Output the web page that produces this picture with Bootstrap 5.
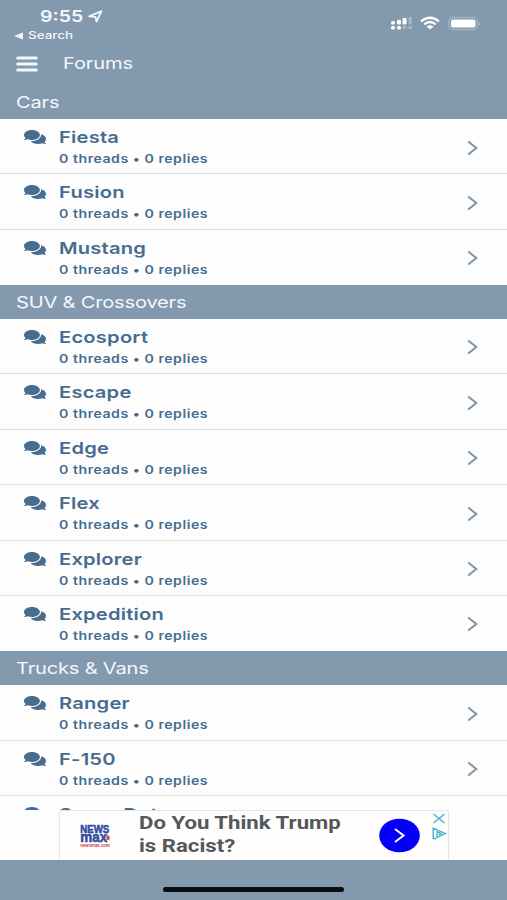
<!DOCTYPE html>
<html lang="en">
<head>
<meta charset="utf-8">
<meta name="viewport" content="width=device-width, initial-scale=1">
<title>Forums</title>
<link href="https://cdn.jsdelivr.net/npm/bootstrap@5.3.0/dist/css/bootstrap.min.css" rel="stylesheet">
<style>
:root { --slate: #8299ae; --ink: #466c8e; }
body { font-family: Inter, "Liberation Sans", sans-serif; background: #fdfdfe; }
.screen { height: 900px; }
.stretch { display: block; width: max-content; transform: scaleX(1.22); transform-origin: 0 50%; white-space: nowrap; }
.slate { background: var(--slate); color: #f4f8fc; }
.status { height: 44px; padding: 7px 26px 0 14px; }
.clock { font-size: 16px; line-height: 18px; font-weight: 600; margin-left: 26px; }
.clock svg { margin: 3px 0 0 13px; }
.back { font-size: 11px; line-height: 13px; font-weight: 500; margin-top: 4px; }
.back .stretch { margin-left: 5px; }
.status-icons { padding-top: 9px; }
.title-bar { height: 41px; padding: 0 16px 2px; }
.title-bar .stretch { font-size: 16.5px; margin-left: 25px; letter-spacing: -.12px; }
.section-head { height: 34px; padding: 0 16px; font-size: 16.5px; letter-spacing: -.18px; }
.forum { height: 55.4px; padding: 8px 29px 0 24px; border-bottom: 1px solid #dcdfe2; color: var(--ink); }
.forum:last-child { border-bottom: 0; height: 55.2px; }
.forum .bubbles { margin: 2px 13px 0 0; }
.forum .name { font-size: 16.5px; line-height: 21px; font-weight: 600; letter-spacing: .18px; }
.forum .count { font-size: 11.6px; line-height: 23px; font-weight: 600; letter-spacing: .42px; }
.forum .go { margin-top: 12.5px; }
.home { height: 40px; }
.home-pill { width: 181px; height: 5px; border-radius: 3px; background: #0b0d0f; margin: 27px 0 0 163px; }
.ad-strip { height: 50px; background: #fdfdfe; padding-left: 59px; }
.ad { width: 390px; height: 50px; background: #fefefe; border: 1px solid #e4e5e7; border-bottom: 0; }
.brand { width: 79px; padding: 11px 0 0 20px; }
.ad-copy { width: 240px; font: 700 18px/23px Roboto, sans-serif; color: #56575a; }
.ad-copy .stretch { transform: scaleX(1.232); }
.ad-go { margin-top: 7px; }
.ad-marks { margin: 2px 0 0 12px; }
</style>
</head>
<body>
<svg class="d-none" xmlns="http://www.w3.org/2000/svg">
  <symbol id="bubbles" viewBox="0 0 576 512" preserveAspectRatio="none"><path fill="currentColor" d="M416 192c0-88.400-93.100-160-208-160S0 103.600 0 192c0 34.300 14.100 65.900 38 92-13.400 30.200-35.500 54.200-35.800 54.500-2.200 2.300-2.800 5.700-1.500 8.700S4.800 352 8 352c36.600 0 66.900-12.300 88.700-25 32.200 15.700 70.300 25 111.300 25 114.900 0 208-71.600 208-160zm122 220c23.900-26 38-57.700 38-92 0-66.900-53.500-124.200-129.300-148.100.9 6.600 1.300 13.300 1.300 20.100 0 105.900-107.700 192-240 192-10.800 0-21.300-.8-31.700-1.900C207.800 439.600 281.800 480 368 480c41 0 79.100-9.200 111.300-25 21.800 12.700 52.100 25 88.700 25 3.200 0 6.100-1.900 7.300-4.800 1.300-2.900.7-6.300-1.500-8.700-.3-.3-22.400-24.200-35.800-54.500z"/></symbol>
  <symbol id="chevron" viewBox="0 0 11 16"><path d="M1.200 1.500 9.300 8l-8.100 6.500" fill="none" stroke="#7e95a8" stroke-width="2"/></symbol>
</svg>

<div class="screen d-flex flex-column overflow-hidden">
  <header class="slate flex-shrink-0">
    <div class="status d-flex justify-content-between">
      <div>
        <div class="clock d-flex"><span class="stretch">9:55</span>
          <svg width="15" height="13" viewBox="0 0 15 13"><path d="M1.200 6.400 13.500 1.200 8.500 11.600 7.500 6.800Z" fill="none" stroke="#f4f8fc" stroke-width="1.800" stroke-linejoin="round"/></svg>
        </div>
        <div class="back d-flex align-items-center"><svg width="9" height="8" viewBox="0 0 9 8"><path d="M0 4 9 .5v7Z" fill="#f4f8fc"/></svg><span class="stretch">Search</span></div>
      </div>
      <div class="status-icons d-flex">
        <svg width="91" height="16" viewBox="390 16 91 16">
          <g fill="#fff"><rect x="391" y="21" width="4" height="3.500" rx="1.500"/><rect x="397" y="20" width="4" height="4.500" rx="1"/><rect x="402.500" y="18" width="4" height="6.500" rx="1"/><rect x="391" y="26" width="4" height="3.500" rx="1.500"/><rect x="397" y="26" width="4" height="3.500" rx="1.500"/></g>
          <g fill="#fff" opacity=".28"><rect x="408.500" y="17" width="3.500" height="7.500" rx="1"/><rect x="402.500" y="26" width="4" height="3" rx="1"/><rect x="408.500" y="26" width="3.500" height="3" rx="1"/></g>
          <g fill="none" stroke="#fff" stroke-width="2.300"><path d="M421 21.300Q430 14.200 439 21.300"/><path d="M424.300 24.300Q430 19.800 435.700 24.300"/></g><path d="M426.500 26.600Q430 23.900 433.500 26.600L430 29.400Z" fill="#fff"/>
          <rect x="449" y="17.500" width="28.500" height="12" rx="4" fill="none" stroke="#a3b4c3" stroke-width="1.500"/><rect x="451" y="19.500" width="24.500" height="8" rx="2" fill="#fff"/><path d="M479 21.500q2 2 0 4Z" fill="#b6c4d0"/>
        </svg>
      </div>
    </div>
    <div class="title-bar d-flex align-items-center">
      <svg width="22" height="16" viewBox="0 0 22 16"><path d="M1.800 2h18.400M1.800 8h18.400M1.800 14h18.400" stroke="#f4f8fc" stroke-width="3.200" stroke-linecap="round"/></svg>
      <span class="stretch">Forums</span>
    </div>
  </header>

  <main class="flex-grow-1 overflow-hidden" id="forums" style="min-height:0"></main>

  <div class="ad-strip flex-shrink-0">
    <aside class="ad d-flex align-items-start">
      <div class="brand">
        <svg class="d-block" width="31" height="27" viewBox="0 0 31 27" font-family="Liberation Sans, Arial, sans-serif" font-weight="700">
          <g fill="#2f4da2" stroke="#2f4da2" stroke-width=".6">
            <text x=".3" y="10.500" font-size="11.500" textLength="29" lengthAdjust="spacingAndGlyphs">NEWS</text>
            <text x=".3" y="20" font-size="15.500" textLength="27" lengthAdjust="spacingAndGlyphs">max</text>
          </g>
          <path d="m28 12.500.8 2 1.500.2-1.200 1.600.6 2.200-1.700-1.100-1.700 1.100.5-2.200-1.200-1.600 1.600-.2Z" fill="#d8323e"/>
          <text x=".3" y="24.800" font-size="5.500" fill="#d8323e" textLength="29.500" lengthAdjust="spacingAndGlyphs">newsmax.com</text>
        </svg>
      </div>
      <div class="ad-copy"><span class="stretch">Do You Think Trump</span><span class="stretch">is Racist?</span></div>
      <svg class="ad-go" width="41" height="35" viewBox="0 0 41 35"><ellipse cx="20.500" cy="17.500" rx="20.300" ry="16.800" fill="#0500f5"/><path d="m16 11 8.500 6.500-8.500 6.500" fill="none" stroke="#fff" stroke-width="2"/></svg>
      <svg class="ad-marks" width="15" height="28" viewBox="0 0 15 28"><path d="m1.500 1 11 9m0-9-11 9" fill="none" stroke="#45aacb" stroke-width="1.300"/><path d="M4 25.500H1.200V15.200L13.500 20.500 5 24.500V18.800L9.300 20.600 6.800 22" fill="none" stroke="#45aacb" stroke-width="1.300"/></svg>
    </aside>
  </div>

  <footer class="home slate flex-shrink-0"><div class="home-pill"></div></footer>
</div>

<script src="https://cdn.jsdelivr.net/npm/bootstrap@5.3.0/dist/js/bootstrap.bundle.min.js"></script>
<script>
const sections = [
  ['Cars', ['Fiesta', 'Fusion', 'Mustang']],
  ['SUV & Crossovers', ['Ecosport', 'Escape', 'Edge', 'Flex', 'Explorer', 'Expedition']],
  ['Trucks & Vans', ['Ranger', 'F-150', 'Super Duty']]
];
const row = name => `<a class="forum d-flex text-decoration-none" href="#">
  <svg class="bubbles flex-shrink-0" width="22" height="16"><use href="#bubbles"/></svg>
  <div class="flex-grow-1"><span class="name stretch">${name}</span><span class="count stretch">0 threads • 0 replies</span></div>
  <svg class="go flex-shrink-0" width="11" height="16"><use href="#chevron"/></svg></a>`;
document.getElementById('forums').innerHTML = sections.map(([title, names]) =>
  `<section><div class="section-head slate d-flex align-items-center"><span class="stretch">${title.replace('&', '&amp;')}</span></div>${names.map(row).join('')}</section>`).join('');
</script>
</body>
</html>
